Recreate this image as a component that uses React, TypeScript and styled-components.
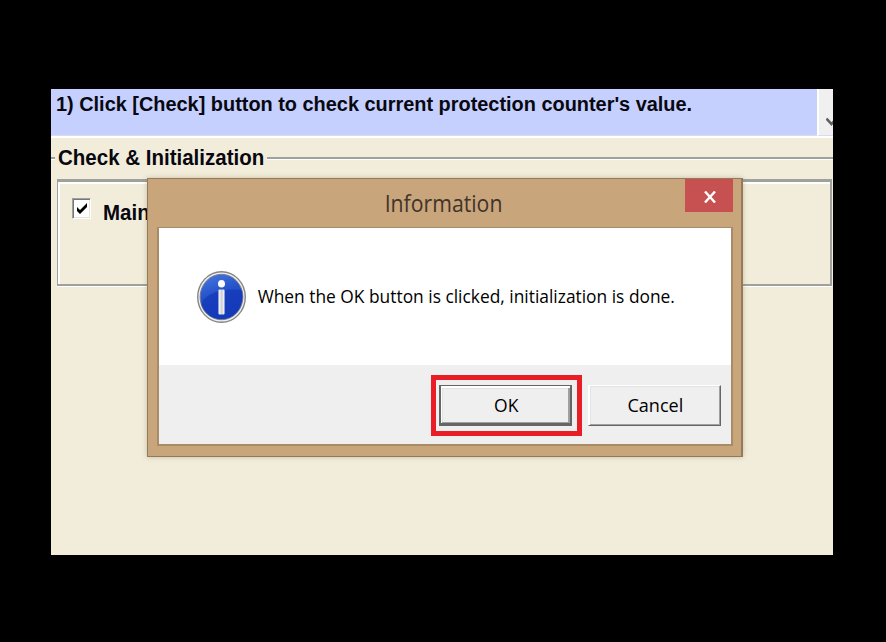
import React from 'react';
import styled, { createGlobalStyle } from 'styled-components';

const GlobalStyle = createGlobalStyle`
  * { box-sizing: border-box; }
  body { margin: 0; background: #000; }
`;

const Screen = styled.div`
  width: 886px;
  height: 642px;
  padding: 89px 53px 87px 51px;
  background: #000;
  overflow: hidden;
`;

const AppWindow = styled.main`
  position: relative;
  width: 782px;
  height: 466px;
  background: #f2edda;
  overflow: hidden;
  color: #080810;
`;

const Banner = styled.header`
  display: flex;
  height: 49px;
  border-bottom: 2px solid #fff;
`;

const BannerText = styled.div`
  width: 766px;
  padding-left: 5px;
  background: #c6d0fe;
  border-bottom: 1px solid #d9dced;
`;

const Label = styled.span<{ $size: number; $stretch?: number; $line: number; $bold?: boolean; $face?: string }>`
  display: block;
  width: max-content;
  font-family: ${p => p.$face ?? '"Liberation Sans"'}, sans-serif;
  font-size: ${p => p.$size}px;
  font-weight: ${p => (p.$bold ? 700 : 400)};
  line-height: ${p => p.$line}px;
  white-space: nowrap;
  transform: scaleX(${p => p.$stretch ?? 1});
  transform-origin: ${p => (p.$bold ? 'left' : 'center')};
`;

const ScrollTrack = styled.div`
  display: flex;
  align-items: flex-end;
  width: 16px;
  padding: 0 0 8px 7px;
  border-left: 2px solid #fff;
  border-bottom: 1px solid #d9dced;
  background: #f0f0f0;
  overflow: hidden;
  svg { flex: none; }
`;

const Legend = styled.div`
  display: flex;
  height: 41px;
`;

const Rule = styled.div<{ $width?: number }>`
  width: ${p => (p.$width ? `${p.$width}px` : 'auto')};
  flex: ${p => (p.$width ? 'none' : '1')};
  height: 3px;
  margin-top: 19px;
  background: #a0a09c;
  border-bottom: 1px solid #fff;
`;

const LegendTitle = styled.div`
  width: 212px;
  padding: 7px 0 0 3px;
`;

const Panel = styled.section`
  width: 775px;
  height: 107px;
  margin-left: 6px;
  border: solid #a0a09c;
  border-width: 3px 2px 2px 1px;
  box-shadow: inset 2px 2px #fff, 0 1px #fff;
`;

const CheckRow = styled.label`
  display: flex;
  padding: 16px 0 0 14px;
`;

const CheckBox = styled.span`
  width: 19px;
  height: 21px;
  border: 1px solid;
  border-color: #a0a09c #fff #fff #a0a09c;
  background: #fff;
  box-shadow: inset 1px 1px #777, inset -1px -1px #e5e3dc;
  svg { display: block; margin: 4px 0 0 3px; }
`;

const CheckLabel = styled.div`
  margin: 2px 0 0 12px;
`;

const Dialog = styled.div`
  position: absolute;
  left: 96px;
  top: 89px;
  width: 596px;
  height: 279px;
  border: solid #957a59;
  border-width: 1px 2px 1px 1px;
  background: #c9a57b;
  box-shadow: 0 0 5px rgba(90, 80, 50, 0.3);
`;

const TitleBar = styled.div`
  display: flex;
  height: 48px;
`;

const Title = styled.div`
  display: flex;
  flex: 1;
  justify-content: center;
  padding: 8px 0 0 55px;
  color: #40342b;
`;

const CloseButton = styled.button`
  display: flex;
  align-items: center;
  justify-content: center;
  width: 48px;
  height: 33px;
  margin-right: 8px;
  padding: 3px 0 0 2px;
  border: 0;
  background: #c75050;
`;

const Content = styled.div`
  width: 576px;
  height: 219px;
  margin-left: 9px;
  border: solid #a98b67;
  border-width: 1px 2px 2px 2px;
`;

const Message = styled.div`
  display: flex;
  height: 137px;
  padding: 42px 0 0 37px;
  background: #fff;
`;

const MessageText = styled.div`
  display: flex;
  justify-content: center;
  width: 418px;
  margin: 13px 0 0 10px;
  color: #000;
`;

const Footer = styled.div`
  display: flex;
  height: 79px;
  padding: 10px 0 0 272px;
  background: #efefef;
  color: #000;
`;

const Highlight = styled.div`
  width: 151px;
  height: 61px;
  margin-right: 6px;
  padding: 5px 0 0 3px;
  border: 5px solid #e91d25;
`;

const Button = styled.button<{ $primary?: boolean }>`
  display: flex;
  justify-content: center;
  width: 133px;
  height: 41px;
  margin-top: ${p => (p.$primary ? 0 : 10)}px;
  padding: ${p => (p.$primary ? '0 0 0 1px' : '0 0 2px 2px')};
  align-items: center;
  border: solid;
  border-width: ${p => (p.$primary ? '1px 2px 3px 2px' : '1px')};
  border-color: ${p => (p.$primary ? '#656565' : '#fff #656565 #656565 #fff')};
  background: #efefef;
  color: #000;
  box-shadow: ${p =>
    p.$primary
      ? 'inset 1px 2px #fff, inset -2px -1px #a0a0a0, inset 2px 3px #e3e3e3'
      : 'inset 1px 0 #fff, inset -1px -1px #a0a0a0, inset 2px 1px #e3e3e3'};
`;

const UI_FACE = '"Open Sans"';

const InfoIcon = () => (
  <svg width="51" height="54" viewBox="0 0 51 54">
    <defs>
      <linearGradient id="disc" x1="0" y1="0" x2="0.35" y2="1">
        <stop offset="0" stopColor="#4a7be2" />
        <stop offset="0.5" stopColor="#2552c9" />
        <stop offset="1" stopColor="#1e48c4" />
      </linearGradient>
      <linearGradient id="stem" x1="0" y1="0" x2="1" y2="0">
        <stop offset="0" stopColor="#fff" />
        <stop offset="0.55" stopColor="#c8ccd6" />
        <stop offset="1" stopColor="#fff" />
      </linearGradient>
    </defs>
    <ellipse cx="25.5" cy="27" rx="23.8" ry="25.3" fill="#eee" stroke="#858585" strokeWidth="1.4" />
    <ellipse cx="25.5" cy="27" rx="21.4" ry="22.7" fill="url(#disc)" stroke="#777d91" strokeWidth="1" />
    <path d="M5 34C10 23 26 18 46 20C49 37 39 49 26 49C15 49 7 43 5 34Z" fill="#0928ad" opacity=".45" />
    <ellipse cx="25.5" cy="13.8" rx="3.5" ry="3.8" fill="#fff" />
    <rect x="22.5" y="19.5" width="6" height="25" rx="1" fill="url(#stem)" />
  </svg>
);

export default function App() {
  return (
    <Screen>
      <GlobalStyle />
      <AppWindow>
        <Banner>
          <BannerText>
            <Label $size={20} $line={30} $stretch={0.995} $bold>1) Click [Check] button to check current protection counter's value.</Label>
          </BannerText>
          <ScrollTrack>
            <svg width="14" height="10" viewBox="0 0 14 10">
              <path d="M0.5 1.5L5.5 7L10.5 1.5" fill="none" stroke="#606060" strokeWidth="2.6" />
            </svg>
          </ScrollTrack>
        </Banner>
        <Legend>
          <Rule $width={4} />
          <LegendTitle>
            <Label $size={22} $line={26} $stretch={0.932} $bold>Check &amp; Initialization</Label>
          </LegendTitle>
          <Rule />
        </Legend>
        <Panel>
          <CheckRow>
            <CheckBox>
              <svg width="12" height="12" viewBox="0 0 12 12">
                <path d="M1 4V8L4 11L11 4V0L4 7Z" fill="#000" />
              </svg>
            </CheckBox>
            <CheckLabel>
              <Label $size={22} $line={26} $stretch={0.932} $bold>Main</Label>
            </CheckLabel>
          </CheckRow>
        </Panel>
        <Dialog role="dialog" aria-label="Information">
          <TitleBar>
            <Title>
              <Label $size={24} $line={32} $stretch={0.885} $face={UI_FACE}>Information</Label>
            </Title>
            <CloseButton aria-label="Close">
              <svg width="12" height="12" viewBox="0 0 12 12">
                <path d="M1 0.5L11 11.5M11 0.5L1 11.5" stroke="#fff" strokeWidth="2.4" />
              </svg>
            </CloseButton>
          </TitleBar>
          <Content>
            <Message>
              <InfoIcon />
              <MessageText>
                <Label $size={19} $line={26} $stretch={0.914} $face={UI_FACE}>When the OK button is clicked, initialization is done.</Label>
              </MessageText>
            </Message>
            <Footer>
              <Highlight>
                <Button $primary>
                  <Label $size={19} $line={26} $stretch={0.92} $face={UI_FACE}>OK</Label>
                </Button>
              </Highlight>
              <Button>
                <Label $size={19} $line={26} $stretch={0.95} $face={UI_FACE}>Cancel</Label>
              </Button>
            </Footer>
          </Content>
        </Dialog>
      </AppWindow>
    </Screen>
  );
}
